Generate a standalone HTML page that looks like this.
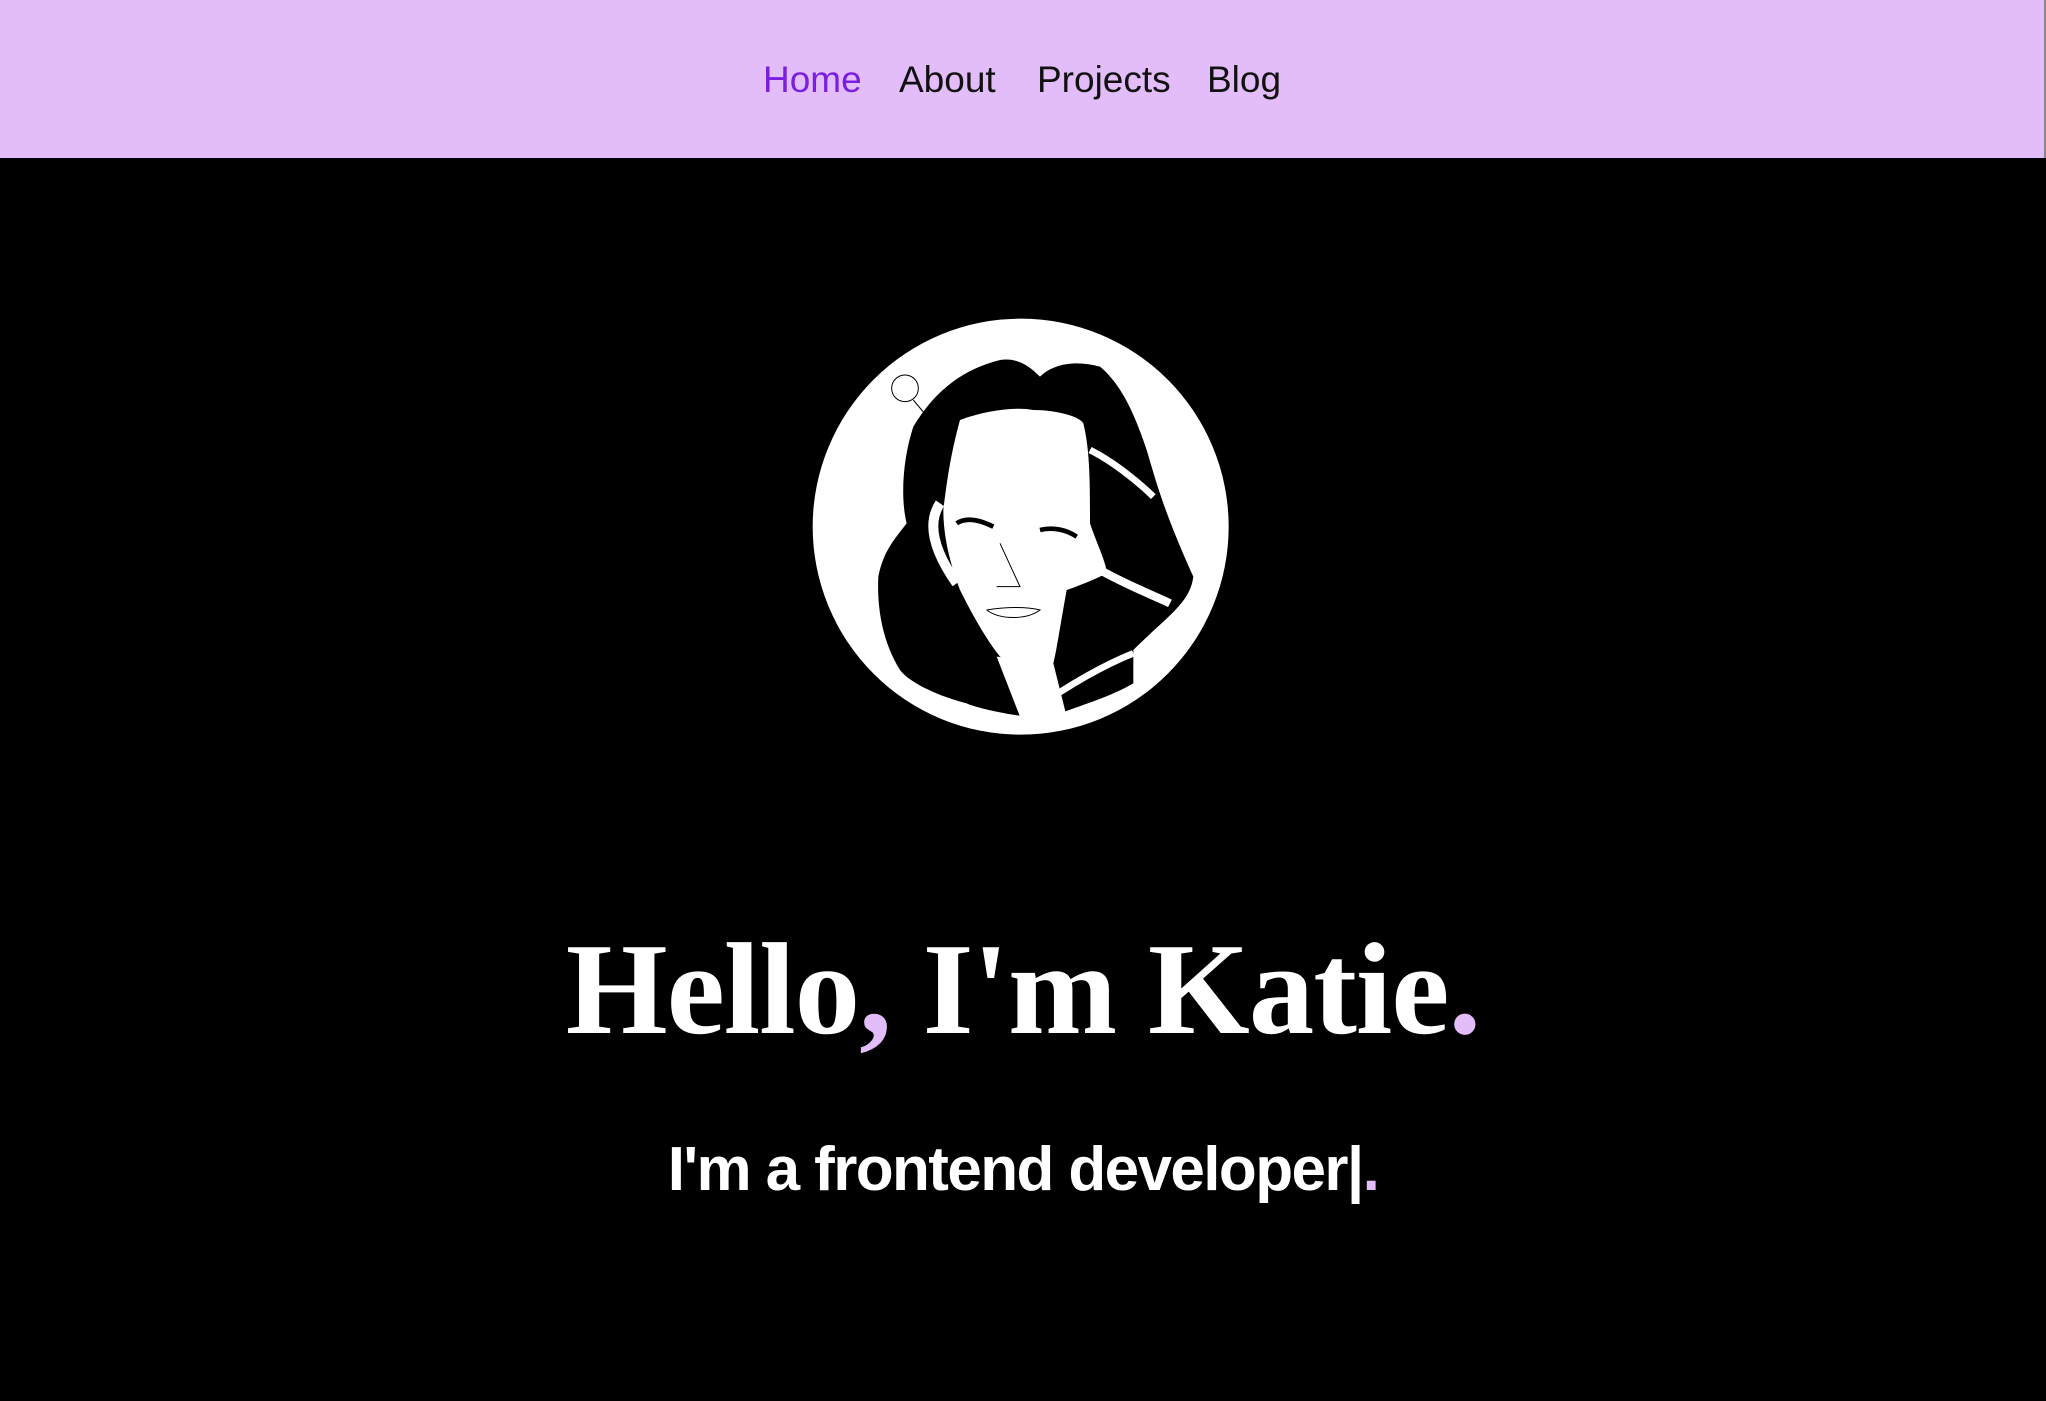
<!DOCTYPE html>
<html><head><meta charset="utf-8"><style>
html,body{margin:0;padding:0;}
body{width:2046px;height:1401px;background:#000;overflow:hidden;position:relative;font-family:"Liberation Sans",sans-serif;}
nav{position:absolute;left:0;top:0;width:2044px;height:158px;background:#e3bdf9;border-right:2px solid #888;}
nav a{position:absolute;top:58px;font-size:37px;color:#111;text-decoration:none;line-height:44px;}
h1{position:absolute;left:0;width:2046px;top:910px;margin:0;text-align:center;font-family:"Liberation Serif",serif;font-weight:bold;font-size:131px;line-height:160px;color:#fff;letter-spacing:-1px;}
.p{color:#e3bdf9}
h2{position:absolute;left:0;width:2046px;top:1130px;margin:0;text-align:center;font-weight:bold;font-size:62px;line-height:80px;color:#fff;letter-spacing:-1.6px;}
</style></head><body>
<nav>
<a style="left:763px;color:#7a1ee0">Home</a>
<a style="left:899px">About</a>
<a style="left:1037px">Projects</a>
<a style="left:1207px">Blog</a>
</nav>
<svg style="position:absolute;left:800px;top:310px" width="440" height="440" viewBox="0 0 1320 1320">
<circle cx="662" cy="650" r="624" fill="#fff"/>
<path d="M340,350 C400,250 480,180 600,150 C660,140 700,180 720,200 C760,160 830,150 900,170 C960,220 1000,300 1040,420 C1070,520 1090,600 1180,800 C1170,880 1100,920 1000,1020 L1000,1120 C930,1160 860,1180 780,1210 L680,1220 C600,1210 520,1190 500,1180 C420,1160 330,1120 300,1080 C250,1000 230,900 235,800 C250,720 290,680 320,640 C300,560 310,440 340,350 Z" fill="#000"/>
<path d="M480,330 C560,300 650,290 700,300 C770,300 840,320 850,340 C870,420 870,520 870,640 C890,700 920,760 920,790 C880,810 830,830 800,840 C780,950 770,1020 760,1060 C700,1070 640,1060 600,1040 C560,990 520,920 480,840 C450,760 430,680 430,600 C440,520 450,440 480,330 Z" fill="#fff"/>
<path d="M590,1040 L760,1060 L800,1220 L660,1220 Z" fill="#fff"/>
<path d="M420,580 C380,640 400,720 470,820" stroke="#fff" stroke-width="30" fill="none"/>
<path d="M870,420 C950,460 1030,530 1060,560" stroke="#fff" stroke-width="20" fill="none"/>
<path d="M900,780 C990,830 1070,860 1110,880" stroke="#fff" stroke-width="25" fill="none"/>
<path d="M700,1200 C800,1130 900,1070 1000,1030" stroke="#fff" stroke-width="20" fill="none"/>
<path d="M470,640 C500,620 540,630 580,650 M720,660 C760,650 800,660 830,680" stroke="#000" stroke-width="14" fill="none"/>
<path d="M600,700 L660,830 L590,830 M560,900 C620,890 680,890 720,900 C680,930 600,930 560,900" stroke="#000" stroke-width="3" fill="none"/>
<circle cx="315" cy="235" r="40" stroke="#000" stroke-width="3" fill="none"/>
<path d="M340,270 L390,330" stroke="#000" stroke-width="3"/>
</svg>
<h1>Hello<span class="p">,</span> I'm Katie<span class="p">.</span></h1>
<h2>I'm a frontend developer|<span class="p">.</span></h2>
</body></html>
